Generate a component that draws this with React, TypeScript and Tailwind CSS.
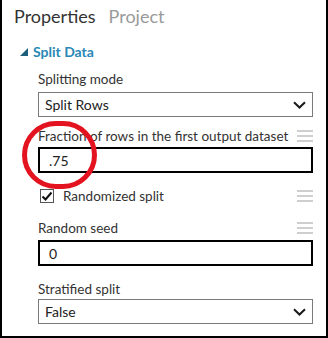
import React from 'react';

const font = { fontFamily: 'Lato, "Open Sans", Arial, sans-serif' };

function Chevron() {
  return (
    <svg width="13" height="8" viewBox="0 0 13 8" className="shrink-0">
      <path d="M1 1.2 L6.5 6.5 L12 1.2" fill="none" stroke="#1a1a1a" strokeWidth="2" />
    </svg>
  );
}

function Grip() {
  return (
    <div className="flex flex-col gap-[3px] w-[16px] shrink-0">
      <div className="h-[2px] bg-[#cfcfcf]" />
      <div className="h-[2px] bg-[#cfcfcf]" />
      <div className="h-[2px] bg-[#cfcfcf]" />
    </div>
  );
}

function Select({ value }: { value: string }) {
  return (
    <div className="h-[25px] border border-[#7a7a7a] flex items-center justify-between pl-[6px] pr-[6px] text-[14px] text-[#222]">
      <span>{value}</span>
      <Chevron />
    </div>
  );
}

function TextBox({ value }: { value: string }) {
  return (
    <div className="h-[26px] border-2 border-black flex items-center pl-[9px] text-[14px] text-[#222]">
      {value}
    </div>
  );
}

export default function App() {
  return (
    <div style={font} className="relative w-[328px] h-[338px] bg-white border-l-2 border-r-2 border-b-2 border-black overflow-hidden">
      <div className="flex gap-[13px] pl-[12px] pt-[4px] text-[18px] leading-[24px]">
        <span className="text-[#333]">Properties</span>
        <span className="text-[#9a9a9a]">Project</span>
      </div>

      <div className="flex items-center gap-[5px] pl-[18px] mt-[13px]">
        <svg width="8" height="8" viewBox="0 0 8 8">
          <polygon points="8,0 8,8 0,8" fill="#1d5f7a" />
        </svg>
        <span className="text-[14px] font-bold text-[#2a87b6]">Split Data</span>
      </div>

      <div className="pl-[36px] pr-[13px] mt-[7px] text-[13.5px] text-[#333] whitespace-nowrap">
        <div className="leading-[20px]">Splitting mode</div>
        <div className="mt-[3px]">
          <Select value="Split Rows" />
        </div>

        <div className="flex items-center justify-between mt-[9px] leading-[20px]">
          <span>Fraction of rows in the first output dataset</span>
          <Grip />
        </div>
        <div className="mt-[1px]">
          <TextBox value=".75" />
        </div>

        <div className="flex items-center justify-between mt-[13px] pl-[2px]">
          <div className="flex items-center gap-[9px]">
            <div className="w-[14px] h-[14px] border border-[#555] flex items-center justify-center">
              <svg width="12" height="11" viewBox="0 0 12 11">
                <path d="M1.5 5.5 L4.5 8.5 L10.5 1.5" fill="none" stroke="#111" strokeWidth="2" />
              </svg>
            </div>
            <span className="leading-[20px]">Randomized split</span>
          </div>
          <Grip />
        </div>

        <div className="flex items-center justify-between mt-[12px] leading-[20px]">
          <span>Random seed</span>
          <Grip />
        </div>
        <div className="mt-[2px]">
          <TextBox value="0" />
        </div>

        <div className="leading-[20px] mt-[13px]">Stratified split</div>
        <div>
          <Select value="False" />
        </div>
      </div>

      <div className="absolute left-[20px] top-[121px] w-[75px] h-[68px] rounded-full border-[5px] border-[#e3141f]" />
    </div>
  );
}
